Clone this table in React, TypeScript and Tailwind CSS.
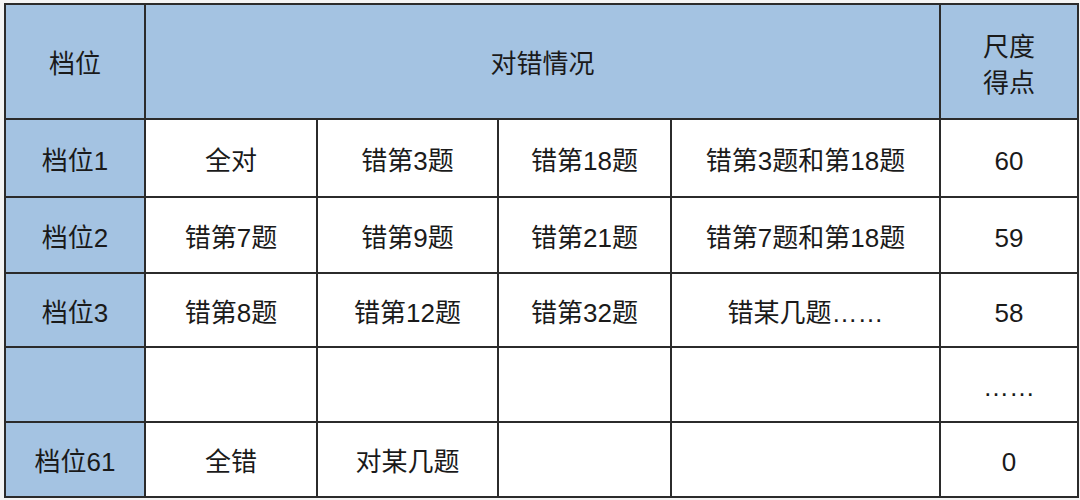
const rows: { label: string; cells: string[]; score: string; h: string }[] = [
  { label: "档位1", cells: ["全对", "错第3题", "错第18题", "错第3题和第18题"], score: "60", h: "h-[78px]" },
  { label: "档位2", cells: ["错第7题", "错第9题", "错第21题", "错第7题和第18题"], score: "59", h: "h-[76px]" },
  { label: "档位3", cells: ["错第8题", "错第12题", "错第32题", "错某几题……"], score: "58", h: "h-[74px]" },
  { label: "", cells: ["", "", "", ""], score: "……", h: "h-[75px]" },
  { label: "档位61", cells: ["全错", "对某几题", "", ""], score: "0", h: "h-[75px]" },
];

const cell = "border-2 border-[#2b2b2b] text-center align-middle px-0 pb-0 pt-[6px]";

export default function App() {
  return (
    <div
      className="w-[1080px] h-[500px] bg-[#f4f4f4] pt-[3px] pl-[4px] text-[#1a1a1a] text-[26px]"
      style={{ fontFamily: '"Liberation Sans", "Noto Sans CJK SC", sans-serif' }}
    >
      <table className="w-[1073px] table-fixed border-collapse bg-white">
        <colgroup>
          <col className="w-[140px]" />
          <col className="w-[172px]" />
          <col className="w-[181px]" />
          <col className="w-[173px]" />
          <col className="w-[269px]" />
          <col className="w-[138px]" />
        </colgroup>
        <thead>
          <tr className="h-[115px] bg-[#a4c3e2]">
            <th className={`${cell} font-normal`}>档位</th>
            <th className={`${cell} font-normal`} colSpan={4}>
              对错情况
            </th>
            <th className={`${cell} font-normal leading-[36px]`}>
              尺度
              <br />
              得点
            </th>
          </tr>
        </thead>
        <tbody>
          {rows.map((r, i) => (
            <tr key={i} className={r.h}>
              <td className={`${cell} bg-[#a4c3e2]`}>{r.label}</td>
              {r.cells.map((c, j) => (
                <td key={j} className={cell}>
                  {c}
                </td>
              ))}
              <td className={cell}>{r.score}</td>
            </tr>
          ))}
        </tbody>
      </table>
    </div>
  );
}
